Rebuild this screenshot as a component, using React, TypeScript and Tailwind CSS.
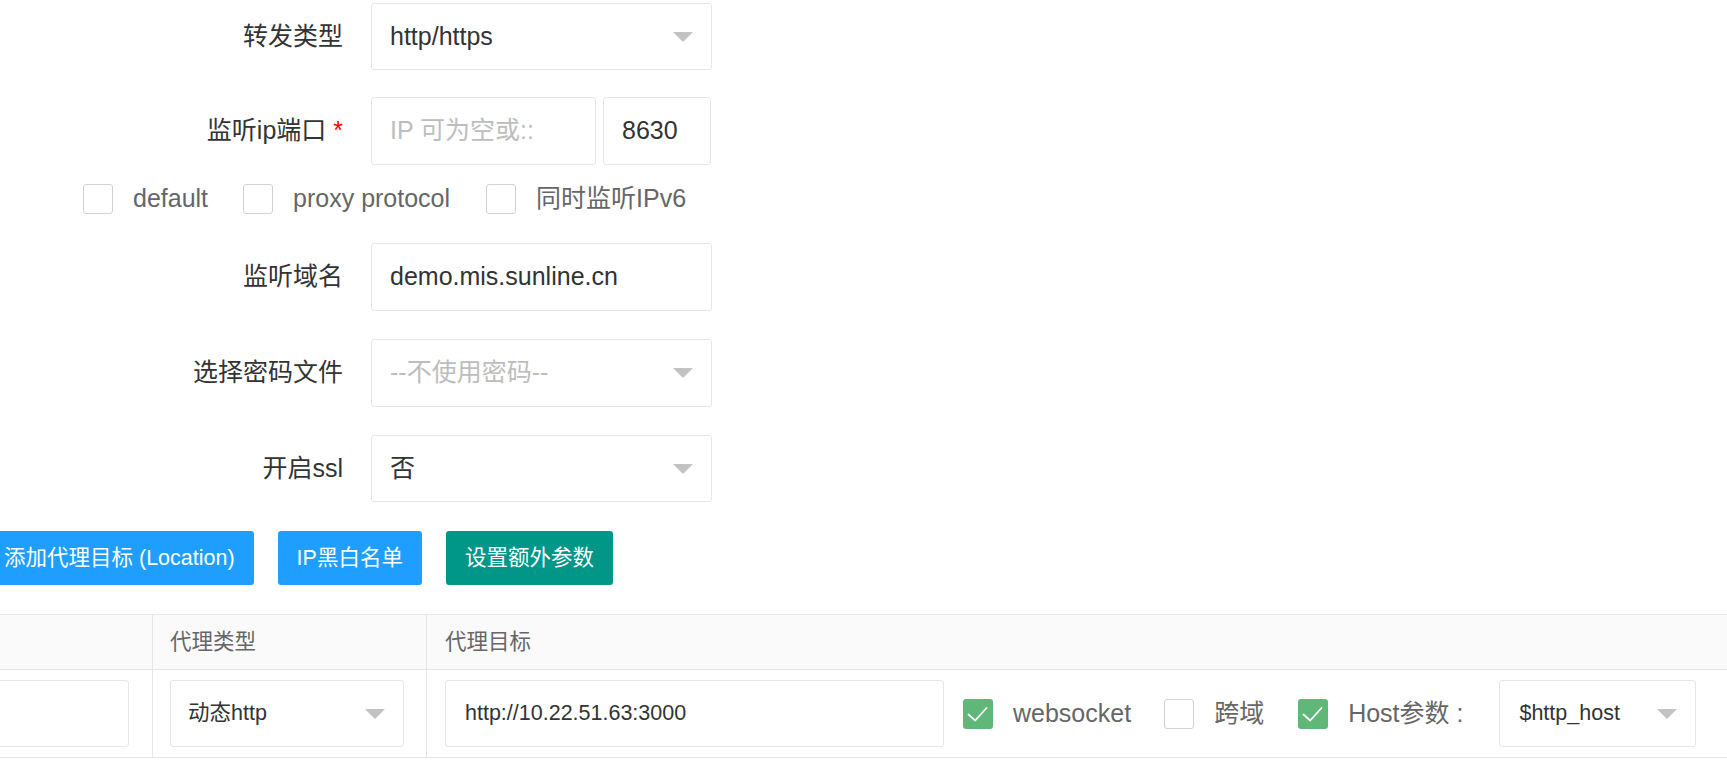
import type { ReactNode } from "react";

const FONT = "font-['Liberation_Sans','Noto_Sans_CJK_SC',sans-serif]";

function Arrow() {
  return (
    <span className="absolute right-[18px] top-1/2 h-0 w-0 -translate-y-1/2 border-x-[10px] border-t-[10px] border-x-transparent border-t-[#c2c2c2]" />
  );
}

function Field({ label, children, className }: { label: ReactNode; children: ReactNode; className: string }) {
  return (
    <div className={`flex items-center ${className}`}>
      <div className="w-[371px] shrink-0 pr-[28px] text-right text-[25px] text-[#333]">{label}</div>
      {children}
    </div>
  );
}

function Box({ checked }: { checked?: boolean }) {
  if (checked) {
    return (
      <span className="flex h-[30px] w-[30px] shrink-0 items-center justify-center rounded-[3px] bg-[#5FB878]">
        <svg viewBox="0 0 30 30" className="h-[30px] w-[30px]">
          <polyline points="5.5,15.5 12.2,21.5 23.5,9" fill="none" stroke="#fff" strokeWidth="1.8" strokeLinecap="round" strokeLinejoin="round" />
        </svg>
      </span>
    );
  }
  return <span className="h-[30px] w-[30px] shrink-0 rounded-[3px] border border-[#d2d2d2] bg-white" />;
}

function Check({ checked, label, className = "" }: { checked?: boolean; label: string; className?: string }) {
  return (
    <div className={`flex items-center ${className}`}>
      <Box checked={checked} />
      <span className="ml-[20px] whitespace-nowrap text-[25px] text-[#666]">{label}</span>
    </div>
  );
}

export default function App() {
  return (
    <div className={`h-[777px] w-screen overflow-hidden bg-white ${FONT}`}>
      <div className="pt-[3px]">
        <Field label="转发类型" className="h-[67px]">
          <div className="relative flex h-[67px] w-[341px] items-center rounded-[3px] border border-[#e6e6e6] pl-[18px] text-[25px] text-[#333]">
            http/https
            <Arrow />
          </div>
        </Field>

        <Field
          label={
            <>
              监听ip端口 <span className="text-[#ff0000]">*</span>
            </>
          }
          className="mt-[27px] h-[68px]"
        >
          <div className="flex h-[68px] w-[225px] items-center rounded-[3px] border border-[#e6e6e6] pl-[18px] text-[25px] text-[#bdbdbd]">
            IP 可为空或::
          </div>
          <div className="ml-[7px] flex h-[68px] w-[108px] items-center rounded-[3px] border border-[#e6e6e6] pl-[18px] text-[25px] text-[#333]">
            8630
          </div>
        </Field>

        <div className="ml-[83px] mt-[19px] flex h-[30px] items-center">
          <Check label="default" />
          <Check label="proxy protocol" className="ml-[35px]" />
          <Check label="同时监听IPv6" className="ml-[36px]" />
        </div>

        <Field label="监听域名" className="mt-[29px] h-[68px]">
          <div className="flex h-[68px] w-[341px] items-center rounded-[3px] border border-[#e6e6e6] pl-[18px] text-[25px] text-[#333]">
            demo.mis.sunline.cn
          </div>
        </Field>

        <Field label="选择密码文件" className="mt-[28px] h-[68px]">
          <div className="relative flex h-[68px] w-[341px] items-center rounded-[3px] border border-[#e6e6e6] pl-[18px] text-[25px] text-[#bdbdbd]">
            --不使用密码--
            <Arrow />
          </div>
        </Field>

        <Field label="开启ssl" className="mt-[28px] h-[67px]">
          <div className="relative flex h-[67px] w-[341px] items-center rounded-[3px] border border-[#e6e6e6] pl-[18px] text-[25px] text-[#333]">
            否
            <Arrow />
          </div>
        </Field>

        <div className="-ml-[15px] mt-[29px] flex gap-[24px]">
          <button className="h-[54px] rounded-[3px] bg-[#1E9FFF] px-[19px] text-[21.5px] whitespace-nowrap text-white">
            添加代理目标 (Location)
          </button>
          <button className="h-[54px] rounded-[3px] bg-[#1E9FFF] px-[19px] text-[21.5px] whitespace-nowrap text-white">
            IP黑白名单
          </button>
          <button className="h-[54px] rounded-[3px] bg-[#009688] px-[19px] text-[21.5px] whitespace-nowrap text-white">
            设置额外参数
          </button>
        </div>

        <div className="-ml-[200px] mt-[29px] w-[calc(100%+600px)] text-[21.5px]">
          <div className="flex h-[56px] border-y border-[#e6e6e6] bg-[#fafafa] text-[#666]">
            <div className="w-[352px] shrink-0" />
            <div className="flex w-[274px] shrink-0 items-center border-l border-[#e6e6e6] pl-[17px]">代理类型</div>
            <div className="flex flex-1 items-center border-l border-[#e6e6e6] pl-[18px]">代理目标</div>
          </div>
          <div className="flex h-[88px] border-b border-[#e6e6e6] text-[#333]">
            <div className="flex w-[352px] shrink-0 items-center pl-[20px] pr-[23px]">
              <div className="h-[67px] w-full rounded-[3px] border border-[#e6e6e6]" />
            </div>
            <div className="flex w-[274px] shrink-0 items-center border-l border-[#e6e6e6] pl-[17px]">
              <div className="relative flex h-[67px] w-[234px] items-center rounded-[3px] border border-[#e6e6e6] pl-[17px]">
                动态http
                <Arrow />
              </div>
            </div>
            <div className="flex flex-1 items-center border-l border-[#e6e6e6] pl-[18px]">
              <div className="flex h-[67px] w-[499px] shrink-0 items-center rounded-[3px] border border-[#e6e6e6] pl-[19px]">
                http://10.22.51.63:3000
              </div>
              <Check checked label="websocket" className="ml-[19px]" />
              <Check label="跨域" className="ml-[33px]" />
              <Check checked label="Host参数 :" className="ml-[34px]" />
              <div className="relative ml-[36px] flex h-[67px] w-[197px] shrink-0 items-center rounded-[3px] border border-[#e6e6e6] pl-[19px]">
                $http_host
                <Arrow />
              </div>
            </div>
          </div>
        </div>
      </div>
    </div>
  );
}
